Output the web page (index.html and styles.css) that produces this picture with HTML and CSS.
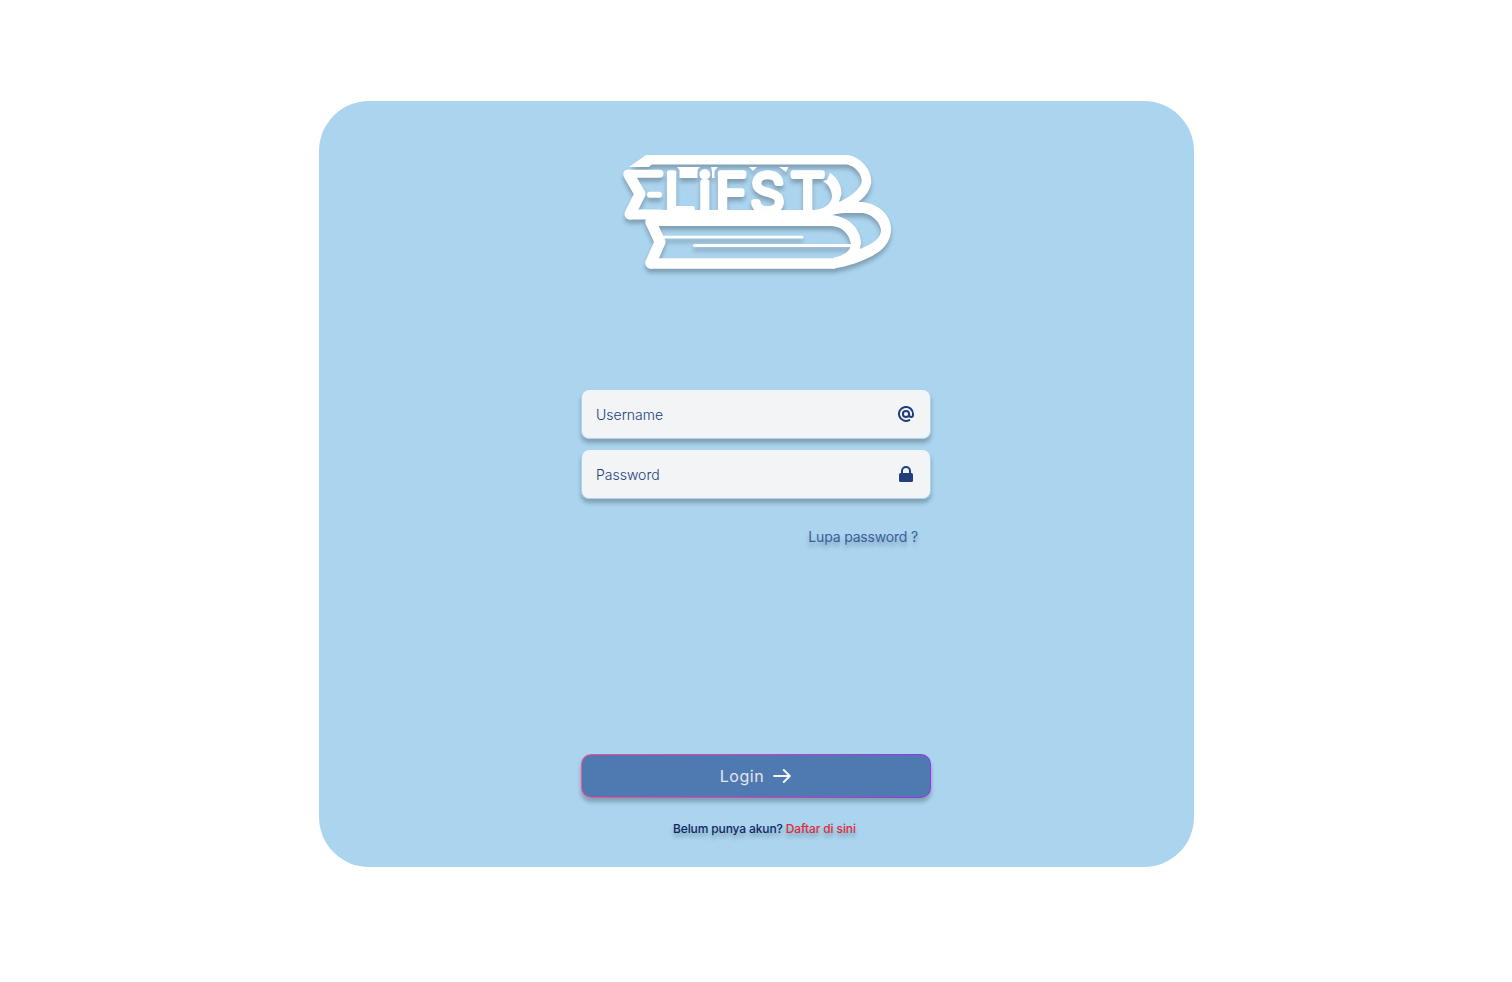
FILE: index.html
```html
<!DOCTYPE html>
<html lang="id">
<head>
<meta charset="utf-8">
<title>E-LiFST Login</title>
<link rel="stylesheet" href="styles.css">
</head>
<body>
<main class="card">
  <svg class="logo" viewBox="610 145 300 140" width="300" height="140" role="img" aria-label="E-LiFST">
    <g class="logo-lines">
      <path stroke-width="9.500" d="M651 159.700H847C859 162 866.500 172 866.500 182C865 193 854 200 842 206"/>
      <path stroke-width="8" d="M627.500 173.700H659.500"/>
      <path stroke-width="11" d="M629 175L640 194L630 214"/>
      <path stroke-width="10" d="M630 214.500H660"/>
      <path stroke-width="11" d="M650.800 222L660 242L650.800 263"/>
      <path stroke-width="10.500" d="M651 263.500H833"/>
      <path stroke-width="6" d="M650 194.800H659"/>
      <path stroke-width="2.800" d="M663 237.200H802"/>
      <path stroke-width="3" d="M694.500 245.500H853"/>
    </g>
    <g class="logo-solid">
      <path d="M629 167L646 155H652V164L649 167Z"/>
      <path d="M677 167H700L697.500 170V178H679.500V170Z"/>
      <path d="M711 167H718L714.500 171V178H712V171ZM749 167H757L753 171ZM779 167H788.500L786 172Z"/>
      <path d="M830 173C838 178 841.500 186 841.500 194L839 202C849 200 853 202 862 202C880 204 891 216 891 229C891 240 885 248 877 253C865 261 846 267 833 268.700V258C843 256 851 251 851 244C849 234 843 227 832 226H650V210H812C824 210 831 204 832 197C832 190 828 184 823 181L827 180ZM832 215C850 217 861 230 861 243L860 249C874 243 881 238 881 230C880 222 872 214 863 213H845C840 213 836 214 832 215Z" fill-rule="evenodd"/>
    </g>
    <text class="logo-text" x="664.500 698.500 715.500 750.500 790.500" y="211.500">LiFST</text>
  </svg>
  <form class="form">
    <label class="field">
      <input type="text" placeholder="Username">
      <svg width="16" height="16" viewBox="0 0 16 16"><path class="at" d="M11.300 14.100A7 7 0 1 1 15 8V8.800C15 10.400 14.300 11.100 13.200 11.100C12 11.100 11.100 10.200 11.100 8.800V8"/><circle class="at" cx="8" cy="8" r="3.100"/></svg>
    </label>
    <label class="field">
      <input type="password" placeholder="Password">
      <svg width="16" height="16" viewBox="0 0 16 16"><rect x="1" y="7" width="14" height="9" rx="1.500" fill="#213f7c"/><path class="at" d="M4 7.500V5A4 4 0 0 1 12 5V7.500"/></svg>
    </label>
    <a class="forgot">Lupa password ?</a>
    <button class="login" type="button"><span>Login</span><svg width="18" height="14" viewBox="0 0 18 14"><path d="M1 7H16.500M10.800 1L16.800 7L10.800 13"/></svg></button>
  </form>
  <p class="signup">Belum punya akun? <a>Daftar di sini</a></p>
</main>
</body>
</html>
```
FILE: styles.css
```css
* { box-sizing: border-box; }
body {
  margin: 0;
  padding-top: 101px;
  background: #fff;
  font-family: Inter, "Liberation Sans", sans-serif;
}
.card {
  width: 875px;
  height: 766px;
  margin: 0 0 0 319px;
  padding: 44px 0 0 262px;
  border-radius: 50px;
  background: #abd4ef;
}
.logo {
  display: block;
  margin-left: 29px;
  filter: drop-shadow(0 4px 2px rgba(0, 0, 0, .25));
}
.logo-lines { fill: none; stroke: #fff; stroke-linecap: round; stroke-linejoin: round; }
.logo-solid { fill: #fff; }
.logo-text {
  font: 300 54px Inter, sans-serif;
  fill: #fff;
  stroke: #fff;
  stroke-width: 5.5;
  stroke-linejoin: round;
}
.form {
  display: flex;
  flex-direction: column;
  width: 350px;
  margin-top: 105px;
}
.field {
  display: flex;
  align-items: center;
  height: 49px;
  margin-bottom: 11px;
  padding: 0 16px 0 14px;
  border: 1px solid #abd4ef;
  border-top: 0;
  border-radius: 8px;
  background: #f3f4f6;
  box-shadow: 0 4px 4px rgba(0, 0, 0, .25);
}
.field input {
  flex: 1;
  min-width: 0;
  padding: 1px 0 0;
  border: 0;
  outline: 0;
  background: transparent;
  font: 300 14px/21px Inter, sans-serif;
}
.field input::placeholder { color: #213f7c; opacity: 1; }
.field svg { flex: none; }
.at { fill: none; stroke: #213f7c; stroke-width: 2; stroke-linecap: round; }
.forgot {
  align-self: flex-end;
  margin: 17px 13px 0 0;
  color: #3b5f9b;
  font-size: 14px;
  line-height: 20px;
  letter-spacing: -.18px;
  text-shadow: 0 4px 4px rgba(0, 0, 0, .25);
}
.login {
  display: flex;
  align-items: center;
  justify-content: center;
  gap: 9px;
  height: 44px;
  margin-top: 207px;
  padding: 0 1px 0 0;
  border: 1px solid transparent;
  border-radius: 10px;
  background: linear-gradient(#4e7ab1, #4e7ab1) padding-box, linear-gradient(90deg, #ff4d8d, #d63ac0 55%, #9333ea) border-box;
  box-shadow: 0 4px 4px rgba(0, 0, 0, .25);
  color: #e5e7eb;
  font: 400 16px/24px Inter, sans-serif;
  letter-spacing: .55px;
}
.login path { fill: none; stroke: #f3f4f6; stroke-width: 2; stroke-linecap: round; stroke-linejoin: round; }
.signup {
  margin: 23px 0 0 92px;
  color: #112765;
  font-size: 12px;
  font-weight: 500;
  line-height: 16px;
  letter-spacing: -.125px;
  text-shadow: 0 4px 4px rgba(0, 0, 0, .25);
}
.signup a { color: #dc2f3c; }
```
